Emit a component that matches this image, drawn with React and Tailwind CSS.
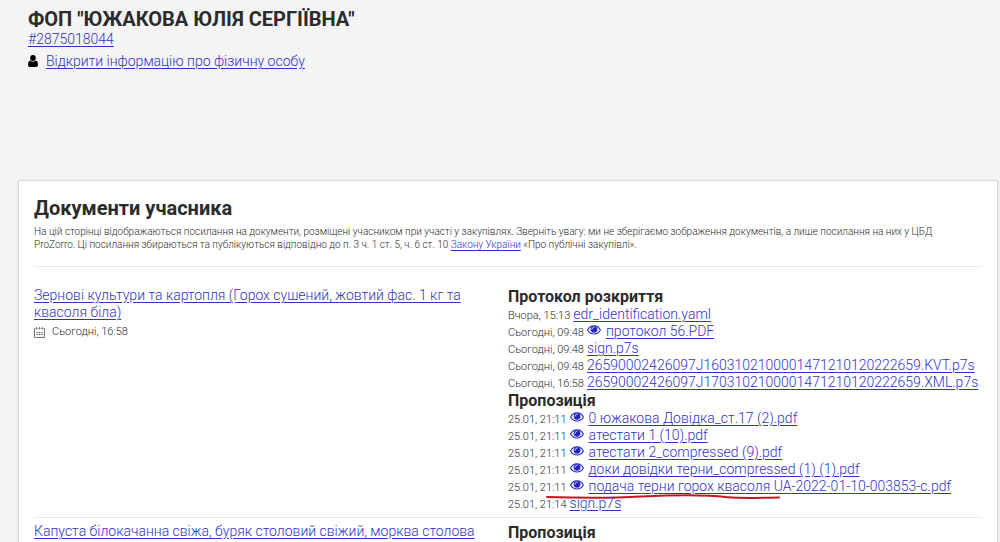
const protocolDocs = [
  { date: "Вчора, 15:13", name: "edr_identification.yaml" },
  { date: "Сьогодні, 09:48", name: "протокол 56.PDF", preview: true },
  { date: "Сьогодні, 09:48", name: "sign.p7s" },
  { date: "Сьогодні, 09:48", name: "26590002426097J1603102100001471210120222659.KVT.p7s" },
  { date: "Сьогодні, 16:58", name: "26590002426097J1703102100001471210120222659.XML.p7s" },
];

const proposalDocs = [
  { date: "25.01, 21:11", name: "0 южакова Довідка_ст.17 (2).pdf", preview: true },
  { date: "25.01, 21:11", name: "атестати 1 (10).pdf", preview: true },
  { date: "25.01, 21:11", name: "атестати 2_compressed (9).pdf", preview: true },
  { date: "25.01, 21:11", name: "доки довідки терни_compressed (1) (1).pdf", preview: true },
  {
    date: "25.01, 21:11",
    name: "подача терни горох квасоля UA-2022-01-10-003853-c.pdf",
    preview: true,
    marked: true,
  },
  { date: "25.01, 21:14", name: "sign.p7s" },
];

const Link = ({ children }) => (
  <a href="#" className="text-[#3232c8] underline underline-offset-2">
    {children}
  </a>
);

const UserIcon = () => (
  <svg viewBox="0 0 10 12" className="h-3 w-[10px]" aria-hidden="true">
    <ellipse cx="5" cy="3" rx="2.8" ry="3" />
    <path d="M2.3 5.4C0.7 5.6 0 7.4 0 9.8C0 11.2 0.8 12 2 12H8C9.2 12 10 11.2 10 9.8C10 7.4 9.3 5.6 7.7 5.4C6.3 7 3.7 7 2.3 5.4Z" />
  </svg>
);

const EyeIcon = () => (
  <svg viewBox="0 0 14 10" className="h-[10px] w-[14px]" aria-hidden="true">
    <path d="M0.6 5C3.6 -0.6 10.4 -0.6 13.4 5C10.4 10.4 3.6 10.4 0.6 5Z" fill="none" stroke="#2323c8" strokeWidth="1.1" />
    <circle cx="7" cy="4.3" r="3.4" fill="#2323c8" />
    <path d="M5 4.2C5.1 3 5.9 2.2 7.1 2.1" fill="none" stroke="#fff" strokeWidth="0.9" strokeLinecap="round" />
  </svg>
);

const CalendarIcon = () => (
  <svg viewBox="0 0 11 11" className="h-[11px] w-[11px]" fill="none" stroke="#555" aria-hidden="true">
    <path d="M0.5 1.5V10.5H10.5V1.5M0.5 1.5H1.5M3.5 1.5H4.5M6.5 1.5H7.5M9.5 1.5H10.5M2.5 0V2.5M5.5 0V2.5M8.5 0V2.5" strokeWidth="0.8" />
    <path d="M2.5 5.5H9M2.5 7.5H9" strokeDasharray="1.4 1" />
  </svg>
);

// Hand-drawn red line under the document of interest
const RedMark = () => (
  <svg
    viewBox="0 0 234 6"
    className="pointer-events-none absolute top-[16px] left-[38px] h-[6px] w-[234px]"
    aria-hidden="true"
  >
    <path
      d="M1 3C30 4 70 4 95 2.5C125 1 160 0.5 180 3C195 4.5 215 4 233 3.5"
      fill="none"
      stroke="#c8141e"
      strokeWidth="2"
      strokeLinecap="round"
    />
  </svg>
);

const DocList = ({ title, docs }) => (
  <section>
    <h3 className="text-base leading-[19px] font-bold">{title}</h3>
    <ul>
      {docs.map((doc, i) => (
        <li key={i} className="relative flex h-[17px] items-baseline gap-[3px] text-sm leading-[17px] whitespace-nowrap">
          <span className="text-[11px]">{doc.date}</span>
          {doc.preview && (
            <a href="#" aria-label="Переглянути" className="mr-[2px] self-start pt-[2px]">
              <EyeIcon />
            </a>
          )}
          <Link>{doc.name}</Link>
          {doc.marked && <RedMark />}
        </li>
      ))}
    </ul>
  </section>
);

export default function App() {
  return (
    <div className="flex h-screen flex-col overflow-hidden bg-[#f4f4f4] font-['Roboto',sans-serif] font-light text-[#2b2b2b]">
      <header className="h-[180px] shrink-0 px-7 pt-[7px] text-sm">
        <h1 className="text-xl leading-6 font-bold">ФОП "ЮЖАКОВА ЮЛІЯ СЕРГІЇВНА"</h1>
        <p className="leading-4">
          <Link>#2875018044</Link>
        </p>
        <p className="mt-1 flex items-center gap-2 leading-5">
          <UserIcon />
          <Link>Відкрити інформацію про фізичну особу</Link>
        </p>
      </header>

      <main className="mr-[2px] ml-[18px] grow border border-b-0 border-[#d8d8d8] bg-white px-[15px] pt-[15px] shadow-sm">
        <h2 className="text-xl leading-6 font-bold">Документи учасника</h2>
        <p className="mt-[5px] pr-4 text-[10px] leading-[13px]">
          На цій сторінці відображаються посилання на документи, розміщені учасником при участі у закупівлях. Зверніть
          увагу: ми не зберігаємо зображення документів, а лише посилання на них у ЦБД ProZorro. Ці посилання
          збираються та публікуються відповідно до п. 3 ч. 1 ст. 5, ч. 6 ст. 10 <Link>Закону України</Link> «Про
          публічні закупівлі».
        </p>

        <div className="mt-[15px] grid grid-cols-2 border-t border-[#e8e8e8] pt-5 pb-[5px]">
          <div className="pr-5">
            <p className="text-sm leading-[17px]">
              <Link>Зернові культури та картопля (Горох сушений, жовтий фас. 1 кг та квасоля біла)</Link>
            </p>
            <p className="mt-1 flex items-center gap-[7px] text-[11px] leading-[14px]">
              <CalendarIcon />
              Сьогодні, 16:58
            </p>
          </div>
          <div>
            <DocList title="Протокол розкриття" docs={protocolDocs} />
            <DocList title="Пропозиція" docs={proposalDocs} />
          </div>
        </div>

        <div className="grid grid-cols-2 border-t border-[#e8e8e8] pt-[5px]">
          <p className="pr-1 text-sm leading-[17px]">
            <Link>Капуста білокачанна свіжа, буряк столовий свіжий, морква столова</Link>
          </p>
          <DocList title="Пропозиція" docs={[]} />
        </div>
      </main>
    </div>
  );
}
